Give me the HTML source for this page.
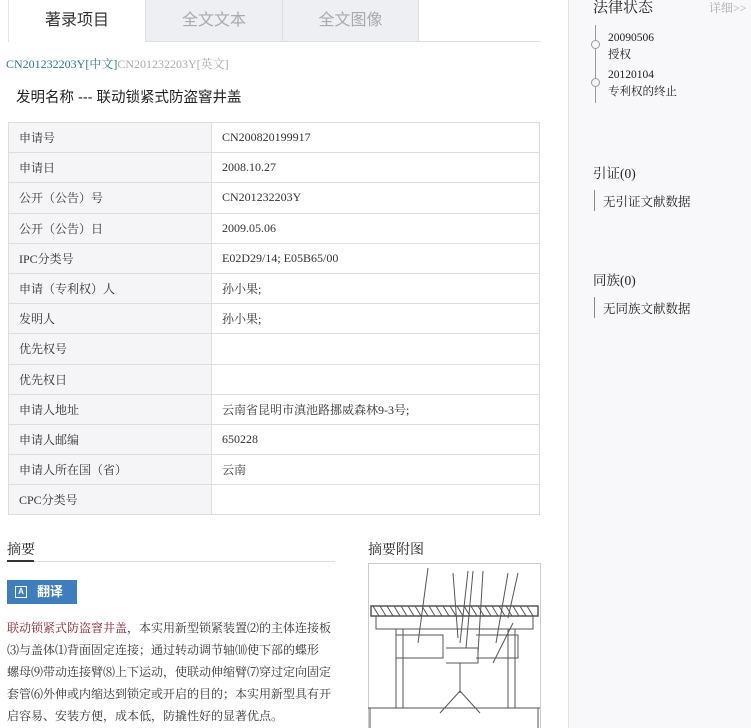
<!DOCTYPE html>
<html><head><meta charset="utf-8"><style>
*{margin:0;padding:0;box-sizing:border-box}
html,body{width:751px;height:728px;overflow:hidden}
body{background:#fff;font-family:"Liberation Serif","Noto Serif CJK SC",serif;color:#333;position:relative}
.a{position:absolute}
.tab{position:absolute;top:0;height:42px;text-align:center;line-height:42px;font-size:16px;font-family:"Liberation Sans","Noto Sans CJK SC",sans-serif}
table{position:absolute;left:8px;top:122px;width:532px;border-collapse:collapse;font-size:12px}
td{border:1px solid #dcdde0;height:30.2px;padding:0 10px}
td.l{background:#f5f5f7;width:203px;font-size:12px}
.side{position:absolute;left:568px;top:0;width:183px;height:728px;background:#f8f8fa;border-left:1px solid #e2e2e6}
.s{font-family:"Liberation Serif","Noto Serif CJK SC",serif}
</style></head><body>
<div class="tab" style="left:8px;width:137px;background:#fff;color:#333;border-left:1px solid #e3e3e6">著录项目</div>
<div class="tab" style="left:145px;width:137px;background:#eeeff2;color:#aaa;border-left:1px solid #dedfe3;border-bottom:1px solid #dedfe3">全文文本</div>
<div class="tab" style="left:282px;width:137px;background:#eeeff2;color:#aaa;border-left:1px solid #dedfe3;border-right:1px solid #dedfe3;border-bottom:1px solid #dedfe3">全文图像</div>
<div class="a" style="left:419px;top:41px;width:122px;height:1px;background:#dedfe3"></div>
<div class="a" style="left:6px;top:55px;font-size:12px;color:#2a7b8a">CN201232203Y[中文]<span style="color:#aaa">CN201232203Y[英文]</span></div>
<div class="a" style="left:16px;top:86px;font-size:14.5px;color:#222;font-family:'Liberation Sans','Noto Sans CJK SC',sans-serif">发明名称 --- 联动锁紧式防盗窨井盖</div>
<table>
<tr><td class="l">申请号</td><td>CN200820199917</td></tr>
<tr><td class="l">申请日</td><td>2008.10.27</td></tr>
<tr><td class="l">公开（公告）号</td><td>CN201232203Y</td></tr>
<tr><td class="l">公开（公告）日</td><td>2009.05.06</td></tr>
<tr><td class="l">IPC分类号</td><td>E02D29/14; E05B65/00</td></tr>
<tr><td class="l">申请（专利权）人</td><td>孙小果;</td></tr>
<tr><td class="l">发明人</td><td>孙小果;</td></tr>
<tr><td class="l">优先权号</td><td></td></tr>
<tr><td class="l">优先权日</td><td></td></tr>
<tr><td class="l">申请人地址</td><td>云南省昆明市滇池路挪威森林9-3号;</td></tr>
<tr><td class="l">申请人邮编</td><td>650228</td></tr>
<tr><td class="l">申请人所在国（省）</td><td>云南</td></tr>
<tr><td class="l">CPC分类号</td><td></td></tr>
</table>
<div class="a" style="left:7px;top:539px;font-size:14px;color:#222">摘要</div>
<div class="a" style="left:7px;top:561px;width:328px;height:1px;background:#ddd"></div>
<div class="a" style="left:7px;top:560px;width:27px;height:2px;background:#333"></div>
<div class="a" style="left:7px;top:580px;width:70px;height:24px;background:#3f7ebe;color:#fff;font-size:13px;font-weight:bold;line-height:24px;padding-left:30px;font-family:'Liberation Sans','Noto Sans CJK SC',sans-serif">翻译
<div class="a" style="left:8px;top:6px;width:12px;height:12px;border:1.5px solid #fff;font-size:8px;line-height:9px;text-align:center">A</div></div>
<div class="a" style="left:7px;top:617px;font-size:12px;line-height:22px;color:#333;white-space:nowrap">
<span style="color:#8a1a2a">联动锁紧式防盗窨井盖</span>，本实用新型锁紧装置⑵的主体连接板<br>⑶与盖体⑴背面固定连接；通过转动调节轴⑽使下部的蝶形<br>螺母⑼带动连接臂⑻上下运动，使联动伸缩臂⑺穿过定向固定<br>套管⑹外伸或内缩达到锁定或开启的目的；本实用新型具有开<br>启容易、安装方便，成本低，防撬性好的显著优点。</div>
<div class="a" style="left:368px;top:539px;font-size:14px;color:#222">摘要附图</div>
<svg class="a" style="left:368px;top:563px" width="173" height="165" viewBox="0 0 173 165" fill="none" stroke="#555" stroke-width="1">
<path d="M0.5 165 V0.5 H172.5 V165" stroke="#ccc"/>
<path d="M60 5 L50 80 M85 10 L90 75 M100 8 L92 80 M105 8 L98 85 M115 8 L110 90 M140 10 L128 80 M150 10 L140 55 M145 60 L125 100"/>
<rect x="3" y="43" width="167" height="10" stroke-width="1.5"/>
<path d="M5 43 l6 10 M12 43 l6 10 M19 43 l6 10 M26 43 l6 10 M33 43 l6 10 M40 43 l6 10 M47 43 l6 10 M54 43 l6 10 M61 43 l6 10 M68 43 l6 10 M75 43 l6 10 M82 43 l6 10 M89 43 l6 10 M96 43 l6 10 M103 43 l6 10 M110 43 l6 10 M117 43 l6 10 M124 43 l6 10 M131 43 l6 10 M138 43 l6 10 M145 43 l6 10 M152 43 l6 10 M159 43 l6 10"/>
<path d="M8 53 V66 H165 V53 M28 66 V145 M35 66 V145 M140 66 V145 M147 66 V145 M28 72 H75 V95 H28 M108 72 H150 V95 H108 M78 85 H110 V100 H78 M92 100 V130 M72 150 L92 128 L112 150 M0 145 H172 M2 145 V165 M170 145 V165"/>
</svg>
<div class="side">
<div class="a s" style="left:24px;top:-4px;font-size:15px;color:#222">法律状态</div>
<div class="a s" style="left:140px;top:-1px;font-size:12px;color:#aaa">详细&gt;&gt;</div>
<div class="a" style="left:26px;top:25px;width:1px;height:78px;background:#999"></div>
<div class="a" style="left:22px;top:40px;width:9px;height:9px;border:1px solid #999;border-radius:50%;background:#f8f8fa"></div>
<div class="a" style="left:22px;top:78px;width:9px;height:9px;border:1px solid #999;border-radius:50%;background:#f8f8fa"></div>
<div class="a s" style="left:39px;top:30px;font-size:11.5px;line-height:17px;color:#222">20090506<br>授权</div>
<div class="a s" style="left:39px;top:67px;font-size:11.5px;line-height:17px;color:#222">20120104<br>专利权的终止</div>
<div class="a s" style="left:24px;top:162px;font-size:13.5px;color:#222">引证(0)</div>
<div class="a" style="left:25px;top:190px;width:1px;height:21px;background:#888"></div>
<div class="a s" style="left:34px;top:192px;font-size:12.5px;color:#222">无引证文献数据</div>
<div class="a s" style="left:24px;top:269px;font-size:13.5px;color:#222">同族(0)</div>
<div class="a" style="left:25px;top:297px;width:1px;height:21px;background:#888"></div>
<div class="a s" style="left:34px;top:299px;font-size:12.5px;color:#222">无同族文献数据</div>
</div>
</body></html>
